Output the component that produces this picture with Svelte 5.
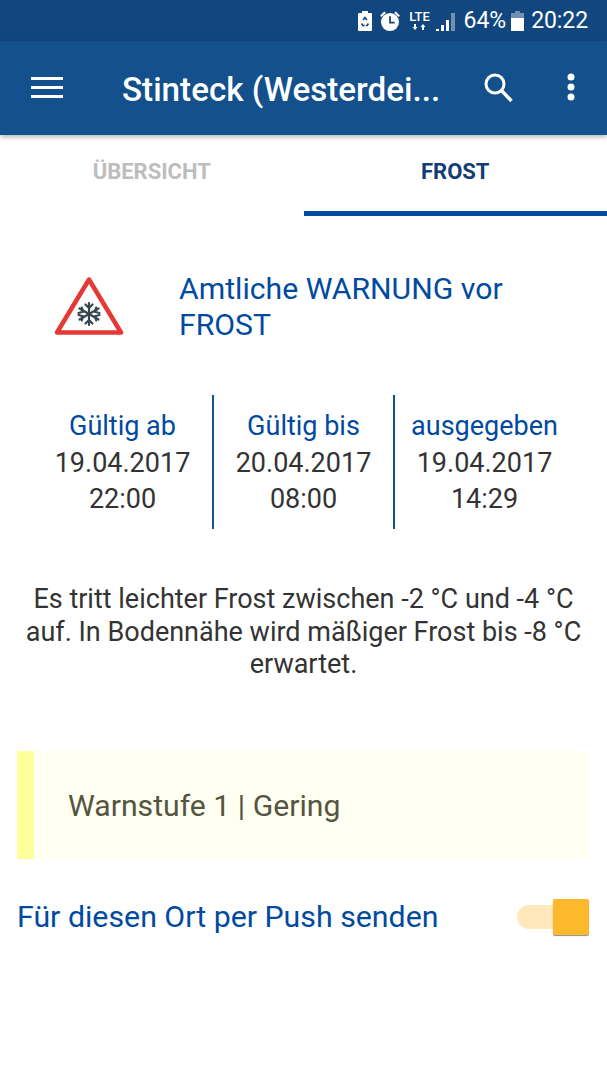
<script>
	const tabs = [
		{ label: 'ÜBERSICHT', active: false },
		{ label: 'FROST', active: true }
	];

	const validity = [
		{ label: 'Gültig ab', date: '19.04.2017', time: '22:00' },
		{ label: 'Gültig bis', date: '20.04.2017', time: '08:00' },
		{ label: 'ausgegeben', date: '19.04.2017', time: '14:29' }
	];
</script>

<div class="screen">
	<div class="statusbar">
		<svg class="st-saver" width="14" height="20" viewBox="0 0 14 20">
			<path fill="#fff" d="M4 0h6v2h3a1 1 0 0 1 1 1v16a1 1 0 0 1-1 1H1a1 1 0 0 1-1-1V3a1 1 0 0 1 1-1h3z" />
			<path fill="none" stroke="#12467f" stroke-width="1.6" d="M5 9l2-2.5L9 9M3.6 12.5l1.2 2h2M10.4 12.5l-1.2 2H8" />
		</svg>
		<svg class="st-alarm" width="22" height="22" viewBox="0 0 21 21">
			<circle cx="10.5" cy="11.5" r="8.6" fill="#fff" />
			<path fill="none" stroke="#12467f" stroke-width="1.7" d="M10.5 6v6h4.5" />
			<path fill="#fff" d="M1 5.5 5 1.5l1.6 1.3-4.2 4zM20 5.5 16 1.5l-1.6 1.3 4.2 4z" />
		</svg>
		<div class="st-lte">
			<span>LTE</span>
			<svg width="16" height="6" viewBox="0 0 16 6">
				<path fill="#fff" d="M3 6 .5 3H2V0h2v3h1.500zM11 0l2.500 3H12v3h-2V3H8.500z" />
			</svg>
		</div>
		<svg class="st-signal" width="20" height="20" viewBox="0 0 20 20">
			<path fill="#fff" d="M0 20v-2h3v2zM5 20v-6h3v6zM10 20V9h3v11z" />
			<path fill="#fff" opacity=".4" d="M15 20V2h4v18z" />
		</svg>
		<span class="st-text">64%</span>
		<svg class="st-battery" width="13" height="20" viewBox="0 0 13 20">
			<path fill="#fff" opacity=".4" d="M4 0h5v2h4v5H0V2h4z" />
			<path fill="#fff" d="M0 7h13v13H0z" />
		</svg>
		<span class="st-text clock">20:22</span>
	</div>

	<header class="appbar">
		<svg class="menu" width="34" height="24" viewBox="0 0 34 24">
			<path fill="#fff" d="M1 2h32v3H1zM1 11h32v3H1zM1 20h32v3H1z" />
		</svg>
		<h1>Stinteck (Westerdei...</h1>
		<svg class="search" width="32" height="32" viewBox="0 0 32 32">
			<circle cx="12" cy="12" r="9" fill="none" stroke="#fff" stroke-width="3" />
			<path stroke="#fff" stroke-width="3.400" d="M18.500 18.500 28.500 29" />
		</svg>
		<svg class="more" width="10" height="28" viewBox="0 0 10 28">
			<circle cx="5" cy="4" r="3.500" fill="#fff" />
			<circle cx="5" cy="14" r="3.500" fill="#fff" />
			<circle cx="5" cy="24" r="3.500" fill="#fff" />
		</svg>
	</header>

	<nav class="tabs">
		{#each tabs as tab}
			<div class="tab" class:active={tab.active}>{tab.label}</div>
		{/each}
	</nav>

	<main>
		<section class="title">
			<svg class="warn" width="70" height="60" viewBox="0 0 70 60">
				<path fill="#fff" stroke="#e53935" stroke-width="4.500" stroke-linejoin="round" d="M35 3.500 67 56.500H3z" />
				<g stroke="#37474f" stroke-width="2.200" fill="none" stroke-linecap="round">
					<path d="M35 27v22M25.500 32.500l19 11M44.500 32.500l-19 11" />
					<path d="M31.500 28.500 35 32l3.500-3.500M31.500 47.500 35 44l3.500 3.500" />
					<path d="M24.500 37l4.500-1.200-1.200-4.300M45.500 37 41 35.800l1.200-4.300M24.500 39l4.500 1.200-1.200 4.300M45.500 39 41 40.200l1.200 4.300" />
				</g>
			</svg>
			<h2>Amtliche WARNUNG vor FROST</h2>
		</section>

		<section class="validity">
			{#each validity as col}
				<div class="col">
					<div class="col-label">{col.label}</div>
					<div>{col.date}</div>
					<div>{col.time}</div>
				</div>
			{/each}
		</section>

		<p class="desc">Es tritt leichter Frost zwischen -2 °C und -4 °C auf. In Bodennähe wird mäßiger Frost bis -8 °C erwartet.</p>

		<div class="level">Warnstufe 1 | Gering</div>

		<div class="push">
			<span>Für diesen Ort per Push senden</span>
			<div class="switch">
				<div class="track"></div>
				<div class="thumb"></div>
			</div>
		</div>
	</main>
</div>

<style>
	:global(body) {
		margin: 0;
		background: #fff;
	}

	.screen {
		width: 607px;
		height: 1080px;
		overflow: hidden;
		font-family: Roboto, sans-serif;
		background: #fff;
	}

	.statusbar {
		height: 41px;
		background: #12467f;
		display: flex;
		align-items: center;
		justify-content: flex-end;
		padding-right: 19px;
		box-sizing: border-box;
		color: #fff;
	}

	.st-saver {
		margin-right: 7px;
	}

	.st-alarm {
		margin-right: 8px;
	}

	.st-lte {
		display: flex;
		flex-direction: column;
		align-items: center;
		margin-right: 5px;
		width: 22px;
		transform: translateY(-1px);
	}

	.st-lte span {
		font-size: 13px;
		line-height: 14px;
		font-weight: 500;
	}

	.st-lte svg {
		display: block;
	}

	.st-signal {
		margin-right: 8px;
	}

	.st-text {
		font-size: 23px;
		line-height: 41px;
	}

	.clock {
		letter-spacing: -0.1px;
	}

	.st-battery {
		margin: 0 7px 0 5px;
	}

	.appbar {
		height: 94px;
		background: #13508c;
		display: flex;
		align-items: center;
		box-shadow: 0 2px 5px rgba(0, 0, 0, 0.3);
		position: relative;
		color: #fff;
	}

	.menu {
		margin-left: 30px;
		margin-top: -3px;
	}

	.appbar h1 {
		margin: 3px 0 0 58px;
		font-size: 33.200px;
		font-weight: 500;
		line-height: 40px;
		white-space: nowrap;
		width: 360px;
	}

	.search {
		margin-left: 1px;
		margin-top: -1px;
	}

	.more {
		margin-left: 51px;
		margin-top: -2px;
	}

	.tabs {
		display: flex;
		height: 81px;
	}

	.tab {
		flex: 1;
		display: flex;
		justify-content: center;
		padding-top: 24px;
		box-sizing: border-box;
		font-size: 22px;
		font-weight: 700;
		line-height: 26px;
		color: #bdbdbd;
	}

	.tab.active {
		color: #123d78;
		border-bottom: 5px solid #004a9f;
	}

	main {
		display: flex;
		flex-direction: column;
	}

	.title {
		display: flex;
		align-items: center;
		padding: 55px 60px 0 54px;
	}

	.warn {
		flex: none;
		margin: -2px 55px 0 0;
	}

	.title h2 {
		margin: 0;
		font-size: 30.200px;
		font-weight: 400;
		line-height: 36px;
		color: #004a9f;
	}

	.validity {
		display: flex;
		margin: 52px 0 0 33px;
		width: 541px;
		font-size: 27px;
		line-height: 36.500px;
		color: #333;
		text-align: center;
	}

	.col {
		flex: 1;
		padding: 13px 0 0;
		height: 121px;
		border-left: 2px solid #13508c;
		box-sizing: content-box;
	}

	.col:first-child {
		border-left: none;
	}

	.col-label {
		color: #004a9f;
	}

	.desc {
		margin: 54px 20px 0;
		font-size: 27px;
		line-height: 32.500px;
		color: #333;
		text-align: center;
	}

	.level {
		margin: 70px 18px 0 17px;
		height: 108px;
		box-sizing: border-box;
		background: #fffff2;
		border-left: 17px solid #ffff99;
		padding: 2px 0 0 34px;
		display: flex;
		align-items: center;
		font-size: 30.200px;
		color: #55553f;
	}

	.push {
		display: flex;
		align-items: center;
		justify-content: space-between;
		margin: 35px 18px 0 17px;
		height: 46px;
		font-size: 30.300px;
		color: #004a9f;
	}

	.switch {
		position: relative;
		width: 72px;
		height: 36px;
	}

	.track {
		position: absolute;
		left: 0;
		top: 6px;
		width: 50px;
		height: 24px;
		border-radius: 12px;
		background: #fee8bc;
	}

	.thumb {
		position: absolute;
		right: 0;
		top: 0;
		width: 36px;
		height: 36px;
		box-sizing: border-box;
		border-radius: 2px;
		background: #fdb92c;
		box-shadow: 0 1px 1px rgba(0, 0, 0, 0.45);
	}
</style>
